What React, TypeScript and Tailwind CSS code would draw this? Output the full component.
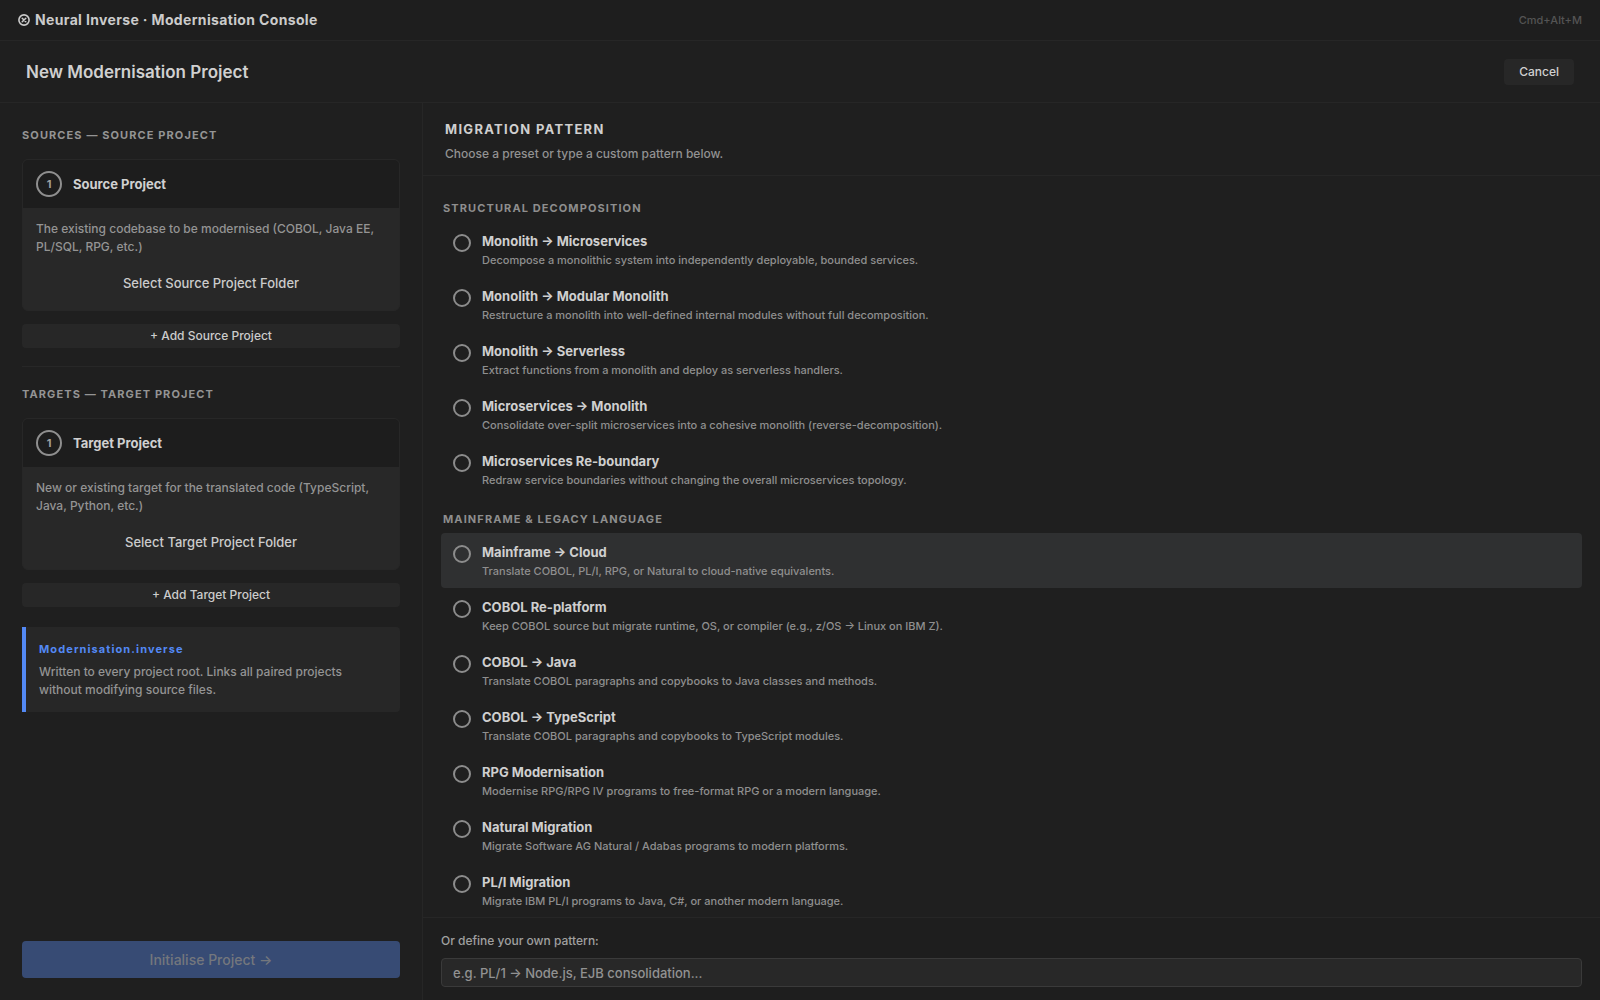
import { useState } from "react";

type Pattern = { name: string; description: string };
type PatternGroup = { title: string; patterns: Pattern[] };

const groups: PatternGroup[] = [
  {
    title: "STRUCTURAL DECOMPOSITION",
    patterns: [
      { name: "Monolith → Microservices", description: "Decompose a monolithic system into independently deployable, bounded services." },
      { name: "Monolith → Modular Monolith", description: "Restructure a monolith into well-defined internal modules without full decomposition." },
      { name: "Monolith → Serverless", description: "Extract functions from a monolith and deploy as serverless handlers." },
      { name: "Microservices → Monolith", description: "Consolidate over-split microservices into a cohesive monolith (reverse-decomposition)." },
      { name: "Microservices Re-boundary", description: "Redraw service boundaries without changing the overall microservices topology." },
    ],
  },
  {
    title: "MAINFRAME & LEGACY LANGUAGE",
    patterns: [
      { name: "Mainframe → Cloud", description: "Translate COBOL, PL/I, RPG, or Natural to cloud-native equivalents." },
      { name: "COBOL Re-platform", description: "Keep COBOL source but migrate runtime, OS, or compiler (e.g., z/OS → Linux on IBM Z)." },
      { name: "COBOL → Java", description: "Translate COBOL paragraphs and copybooks to Java classes and methods." },
      { name: "COBOL → TypeScript", description: "Translate COBOL paragraphs and copybooks to TypeScript modules." },
      { name: "RPG Modernisation", description: "Modernise RPG/RPG IV programs to free-format RPG or a modern language." },
      { name: "Natural Migration", description: "Migrate Software AG Natural / Adabas programs to modern platforms." },
      { name: "PL/I Migration", description: "Migrate IBM PL/I programs to Java, C#, or another modern language." },
    ],
  },
];

function Logo() {
  return (
    <svg viewBox="0 0 12 12" className="size-3" fill="none" stroke="currentColor" aria-hidden="true">
      <circle cx="6" cy="6" r="5.1" strokeWidth="1.6" />
      <path d="M4.2 4.2l3.6 3.6M7.8 4.2l-3.6 3.6" strokeWidth="1.5" strokeLinecap="round" />
    </svg>
  );
}

function ProjectSection({ heading, title, description }: { heading: string; title: string; description: string }) {
  return (
    <section className="flex flex-col">
      <h2 className="text-[11px] leading-4 font-bold tracking-widest text-[#949494]">{heading}</h2>
      <div className="mt-4 overflow-hidden rounded-md border border-[#272727] bg-[#282828]">
        <div className="flex items-center gap-[11px] bg-[#1d1d1d] px-[13px] py-[11px]">
          <span className="flex size-[26px] items-center justify-center rounded-full border-2 border-[#8f8f8f] text-[11px] font-bold text-[#a0a0a0]">
            1
          </span>
          <h3 className="text-[13px] leading-5 font-bold text-[#d0d0d0]">{title}</h3>
        </div>
        <div className="px-[13px] py-3">
          <p className="text-xs leading-[18px] font-medium text-[#949494]">{description}</p>
          <button type="button" className="mt-[14px] h-7 w-full rounded-sm text-[13px] font-medium text-[#cccccc]">
            Select {title} Folder
          </button>
        </div>
      </div>
      <button type="button" className="mt-[13px] h-6 rounded bg-[#272727] text-xs font-medium text-[#cccccc]">
        + Add {title}
      </button>
    </section>
  );
}

function PatternOption({ pattern, highlighted, checked, onSelect }: { pattern: Pattern; highlighted: boolean; checked: boolean; onSelect: () => void }) {
  return (
    <label className={`flex cursor-pointer gap-[11px] rounded px-3 py-[9px] ${highlighted ? "bg-[#2f3031]" : ""}`}>
      <input
        type="radio"
        name="pattern"
        checked={checked}
        onChange={onSelect}
        className="mt-[3px] size-[18px] shrink-0 appearance-none rounded-full border-2 border-[#8c8c8c] checked:border-[#5389f5]"
      />
      <span className="flex flex-col gap-px">
        <span className="text-[13px] leading-5 font-bold text-[#cfcfcf]">{pattern.name}</span>
        <span className="text-[11px] leading-4 font-medium text-[#8f8f8f]">{pattern.description}</span>
      </span>
    </label>
  );
}

export default function App() {
  const [selected, setSelected] = useState("");
  const [custom, setCustom] = useState("");

  return (
    <div className="flex h-screen flex-col bg-[#1f1f1f] font-['Inter',sans-serif] text-[#d0d0d0]">
      <header className="flex items-center justify-between border-b border-[#262626] bg-[#1e1e1e] px-[18px] py-[10px]">
        <div className="flex items-center gap-[5px] text-sm leading-5 font-bold tracking-wide text-[#cbcbcb]">
          <Logo />
          <span>Neural Inverse · Modernisation Console</span>
        </div>
        <kbd className="font-['Inter',sans-serif] text-[11px] font-medium text-[#545454]">Cmd+Alt+M</kbd>
      </header>

      <div className="flex items-center justify-between border-b border-[#262626] px-[26px] pt-[18px] pb-[17px]">
        <h1 className="text-[17px] leading-[26px] font-semibold text-[#d0d0d0]">New Modernisation Project</h1>
        <button type="button" className="h-[26px] rounded-sm bg-[#272727] px-[15px] text-xs font-medium text-[#d0d0d0]">
          Cancel
        </button>
      </div>

      <div className="flex min-h-0 flex-1">
        <aside className="flex w-[423px] shrink-0 flex-col border-r border-[#262626] px-[22px] pt-6 pb-[22px]">
          <ProjectSection
            heading="SOURCES — SOURCE PROJECT"
            title="Source Project"
            description="The existing codebase to be modernised (COBOL, Java EE, PL/SQL, RPG, etc.)"
          />
          <hr className="mt-[18px] mb-[19px] border-[#272727]" />
          <ProjectSection
            heading="TARGETS — TARGET PROJECT"
            title="Target Project"
            description="New or existing target for the translated code (TypeScript, Java, Python, etc.)"
          />
          <div className="mt-5 rounded-r border-l-4 border-[#5389f5] bg-[#272727] pt-[14px] pr-10 pb-[13px] pl-[13px]">
            <h3 className="text-[11px] leading-4 font-bold tracking-widest text-[#5389f5]">Modernisation.inverse</h3>
            <p className="mt-[6px] text-xs leading-[18px] font-medium text-[#949494]">
              Written to every project root. Links all paired projects without modifying source files.
            </p>
          </div>
          <button type="button" disabled className="mt-auto h-[37px] rounded bg-[#374b74] text-sm font-medium text-[#74777d]">
            Initialise Project →
          </button>
        </aside>

        <main className="flex min-w-0 flex-1 flex-col">
          <div className="border-b border-[#262626] px-[22px] pt-4 pb-3">
            <h2 className="text-[13px] leading-5 font-bold tracking-widest text-[#cfcfcf]">MIGRATION PATTERN</h2>
            <p className="mt-[6px] text-xs leading-[18px] font-medium text-[#929292]">Choose a preset or type a custom pattern below.</p>
          </div>

          <div className="flex min-h-0 flex-1 flex-col gap-[14px] overflow-y-auto px-[18px] pt-6 [scrollbar-width:none]">
            {groups.map((group) => (
              <section key={group.title}>
                <h3 className="mb-[6px] px-[2px] text-[11px] leading-4 font-bold tracking-widest text-[#8e8e8e]">{group.title}</h3>
                {group.patterns.map((pattern) => (
                  <PatternOption
                    key={pattern.name}
                    pattern={pattern}
                    highlighted={pattern.name === "Mainframe → Cloud"}
                    checked={selected === pattern.name}
                    onSelect={() => setSelected(pattern.name)}
                  />
                ))}
              </section>
            ))}
          </div>

          <div className="flex flex-col gap-2 border-t border-[#262626] bg-[#1e1e1e] px-[18px] pt-[14px] pb-[13px]">
            <label htmlFor="custom-pattern" className="text-xs leading-[18px] font-medium text-[#a0a0a0]">
              Or define your own pattern:
            </label>
            <input
              id="custom-pattern"
              type="text"
              value={custom}
              onChange={(event) => setCustom(event.target.value)}
              placeholder="e.g. PL/1 → Node.js, EJB consolidation..."
              className="h-[29px] rounded-sm border border-[#3a3a3a] bg-[#282828] px-[11px] text-[13px] font-medium text-[#d0d0d0] outline-none placeholder:text-[#929292]"
            />
          </div>
        </main>
      </div>
    </div>
  );
}
